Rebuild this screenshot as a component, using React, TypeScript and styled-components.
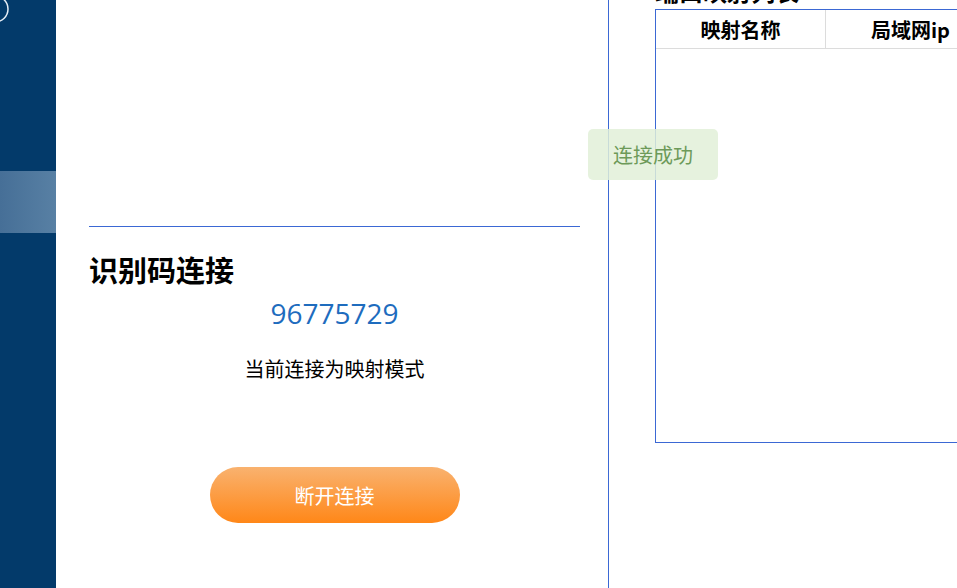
import styled, { createGlobalStyle } from "styled-components";

const GlobalStyle = createGlobalStyle`
  html, body {
    margin: 0;
    padding: 0;
    background: #ffffff;
    font-family: "Noto Sans CJK SC", "Noto Sans", sans-serif;
  }
`;

const Root = styled.div`
  display: flex;
  width: 957px;
  height: 588px;
  overflow: hidden;
  position: relative;
`;

const Sidebar = styled.nav`
  width: 56px;
  flex-shrink: 0;
  background: #033a6a;
  display: flex;
  flex-direction: column;
`;

const Logo = styled.svg`
  display: block;
  width: 56px;
  height: 30px;
  margin-bottom: 141px;
`;

const NavItem = styled.div<{ $active?: boolean }>`
  height: 62px;
  background: ${(p) =>
    p.$active ? "linear-gradient(90deg, #466f97, #5880a4)" : "transparent"};
`;

const Main = styled.div`
  display: flex;
  flex: 1;
`;

const LeftPanel = styled.section`
  width: 552px;
  flex-shrink: 0;
  padding: 226px 28px 0 33px;
  box-sizing: border-box;
`;

const ConnectBox = styled.div`
  border-top: 1px solid #3b68d4;
  display: flex;
  flex-direction: column;
`;

const Heading = styled.h2`
  margin: 22px 0 0;
  font-size: 29px;
  font-weight: 700;
  line-height: 40px;
  color: #000;
`;

const Code = styled.div`
  text-align: center;
  font-family: "Open Sans", "Noto Sans", sans-serif;
  font-size: 28px;
  line-height: 38px;
  color: #1e6cbe;
  margin-top: 5px;
`;

const Mode = styled.div`
  text-align: center;
  font-size: 20px;
  line-height: 28px;
  color: #000;
  margin-top: 23px;
`;

const DisconnectButton = styled.button`
  align-self: center;
  margin-top: 84px;
  width: 250px;
  height: 56px;
  border: none;
  border-radius: 28px;
  background: linear-gradient(180deg, #f9b26f 0%, #ff8718 100%);
  color: #fff;
  font-family: inherit;
  font-size: 20px;
  cursor: pointer;
`;

const RightPanel = styled.section`
  flex: 1;
  border-left: 1px solid #3b68d4;
  padding-left: 46px;
  overflow: hidden;
  display: flex;
  flex-direction: column;
`;

const TableTitle = styled.h3`
  margin: -27px 0 0;
  font-size: 24px;
  font-weight: 700;
  line-height: 36px;
  white-space: nowrap;
  color: #000;
`;

const TableBox = styled.div`
  width: 520px;
  height: 434px;
  border: 1px solid #3b68d4;
  box-sizing: border-box;
`;

const HeaderRow = styled.div`
  display: grid;
  grid-template-columns: 170px 170px 180px;
  height: 38px;
  border-bottom: 1px solid #dcdcdc;
`;

const HeaderCell = styled.div`
  display: flex;
  align-items: center;
  justify-content: center;
  font-size: 20px;
  font-weight: 700;
  border-right: 1px solid #dcdcdc;
  white-space: nowrap;
`;

const Toast = styled.div`
  position: absolute;
  left: 588px;
  top: 129px;
  width: 130px;
  height: 51px;
  border-radius: 5px;
  background: rgba(226, 240, 216, 0.85);
  color: #6d9a59;
  font-size: 20px;
  display: flex;
  align-items: center;
  justify-content: center;
`;

export default function App() {
  return (
    <>
      <GlobalStyle />
      <Root>
        <Sidebar>
          <Logo viewBox="0 0 56 30">
            <circle cx="-5" cy="9" r="13" fill="none" stroke="#e6eef6" strokeWidth="1.5" />
          </Logo>
          <NavItem $active />
        </Sidebar>
        <Main>
          <LeftPanel>
            <ConnectBox>
              <Heading>识别码连接</Heading>
              <Code>96775729</Code>
              <Mode>当前连接为映射模式</Mode>
              <DisconnectButton>断开连接</DisconnectButton>
            </ConnectBox>
          </LeftPanel>
          <RightPanel>
            <TableTitle>端口映射列表</TableTitle>
            <TableBox>
              <HeaderRow>
                <HeaderCell>映射名称</HeaderCell>
                <HeaderCell>局域网ip</HeaderCell>
                <HeaderCell>端口</HeaderCell>
              </HeaderRow>
            </TableBox>
          </RightPanel>
        </Main>
        <Toast>连接成功</Toast>
      </Root>
    </>
  );
}
